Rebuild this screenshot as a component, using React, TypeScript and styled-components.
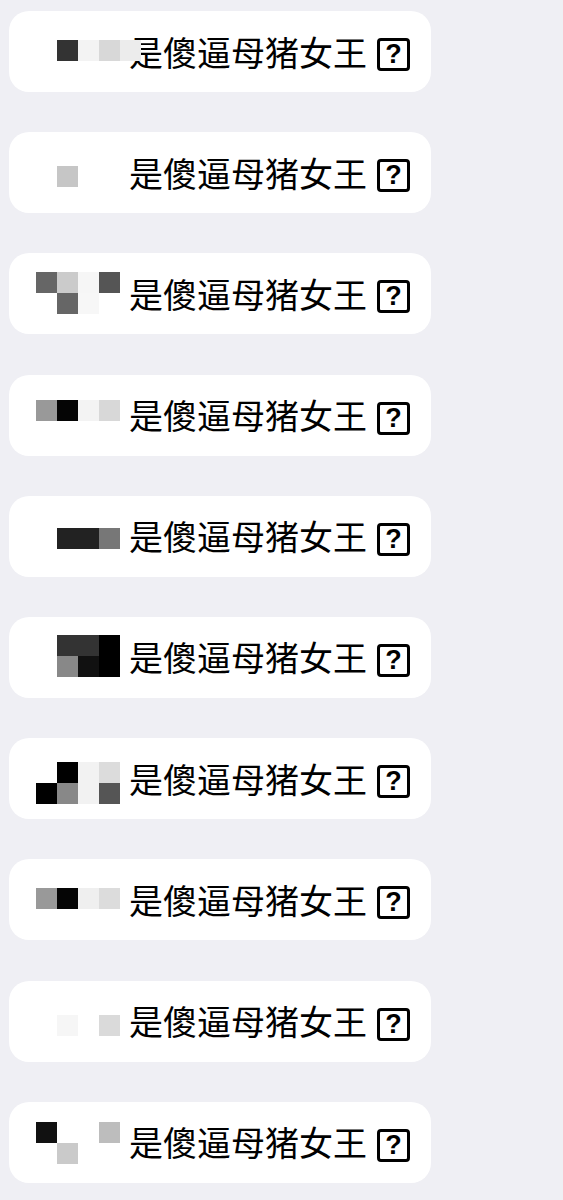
import styled, { createGlobalStyle } from "styled-components";

const GlobalStyle = createGlobalStyle`
  html, body {
    margin: 0;
    padding: 0;
    background: #efeff4;
  }
  body {
    font-family: "Noto Sans CJK SC", "Noto Sans", sans-serif;
  }
`;

type Cell = [number, number, string];

interface Row {
  top: number;
  cells: Cell[];
}

const rows: Row[] = [
  { top: 29, cells: [[1, 0, "#333"], [2, 0, "#f3f3f3"], [3, 0, "#d8d8d8"], [4, 0, "#ececec"]] },
  { top: 34, cells: [[1, 0, "#c6c6c6"]] },
  { top: 19, cells: [[0, 0, "#666"], [1, 0, "#cbcbcb"], [2, 0, "#f6f6f6"], [3, 0, "#555"], [1, 1, "#666"], [2, 1, "#f7f7f7"]] },
  { top: 25, cells: [[0, 0, "#999"], [1, 0, "#050505"], [2, 0, "#f3f3f3"], [3, 0, "#d8d8d8"]] },
  { top: 32, cells: [[1, 0, "#222"], [2, 0, "#222"], [3, 0, "#777"]] },
  { top: 18, cells: [[1, 0, "#333"], [2, 0, "#333"], [3, 0, "#000"], [1, 1, "#888"], [2, 1, "#111"], [3, 1, "#000"]] },
  { top: 24, cells: [[1, 0, "#000"], [2, 0, "#f2f2f2"], [3, 0, "#dcdcdc"], [0, 1, "#000"], [1, 1, "#888"], [2, 1, "#f2f2f2"], [3, 1, "#555"]] },
  { top: 29, cells: [[0, 0, "#999"], [1, 0, "#050505"], [2, 0, "#efefef"], [3, 0, "#dcdcdc"]] },
  { top: 34, cells: [[1, 0, "#f6f6f6"], [3, 0, "#dadada"]] },
  { top: 20, cells: [[0, 0, "#111"], [3, 0, "#bdbdbd"], [1, 1, "#cacaca"]] },
];

export default function App() {
  return (
    <>
      <GlobalStyle />
      <List>
        {rows.map((row, i) => (
          <Bubble key={i}>
            <Mosaic $top={row.top}>
              {row.cells.map(([c, r, color], j) => (
                <Pixel key={j} $col={c} $row={r} $color={color} />
              ))}
            </Mosaic>
            <Message>是傻逼母猪女王</Message>
            <Unknown>
              <Mark>?</Mark>
            </Unknown>
          </Bubble>
        ))}
      </List>
    </>
  );
}

const List = styled.div`
  display: flex;
  flex-direction: column;
  gap: 40.2px;
  padding: 11px 0 0 9px;
`;

const Bubble = styled.div`
  position: relative;
  display: flex;
  align-items: center;
  width: 422px;
  height: 81px;
  box-sizing: border-box;
  padding-left: 120px;
  background: #ffffff;
  border-radius: 20px;
`;

const Mosaic = styled.div<{ $top: number }>`
  position: absolute;
  left: 27px;
  top: ${(p) => p.$top}px;
  display: grid;
  grid-template-columns: repeat(5, 21px);
  grid-template-rows: repeat(2, 21px);
`;

const Pixel = styled.div<{ $col: number; $row: number; $color: string }>`
  grid-column: ${(p) => p.$col + 1};
  grid-row: ${(p) => p.$row + 1};
  background: ${(p) => p.$color};
`;

const Message = styled.span`
  font-size: 34px;
  font-weight: 400;
  line-height: 40px;
  color: #000;
  white-space: nowrap;
`;

const Unknown = styled.div`
  display: flex;
  align-items: center;
  justify-content: center;
  flex: none;
  width: 33px;
  height: 33px;
  box-sizing: border-box;
  margin: 6px 0 0 10px;
  border: 3px solid #000;
  border-radius: 4px;
`;

const Mark = styled.span`
  font-family: "Liberation Sans", Arial, sans-serif;
  font-weight: 700;
  font-size: 27px;
  line-height: 27px;
  color: #000;
`;
